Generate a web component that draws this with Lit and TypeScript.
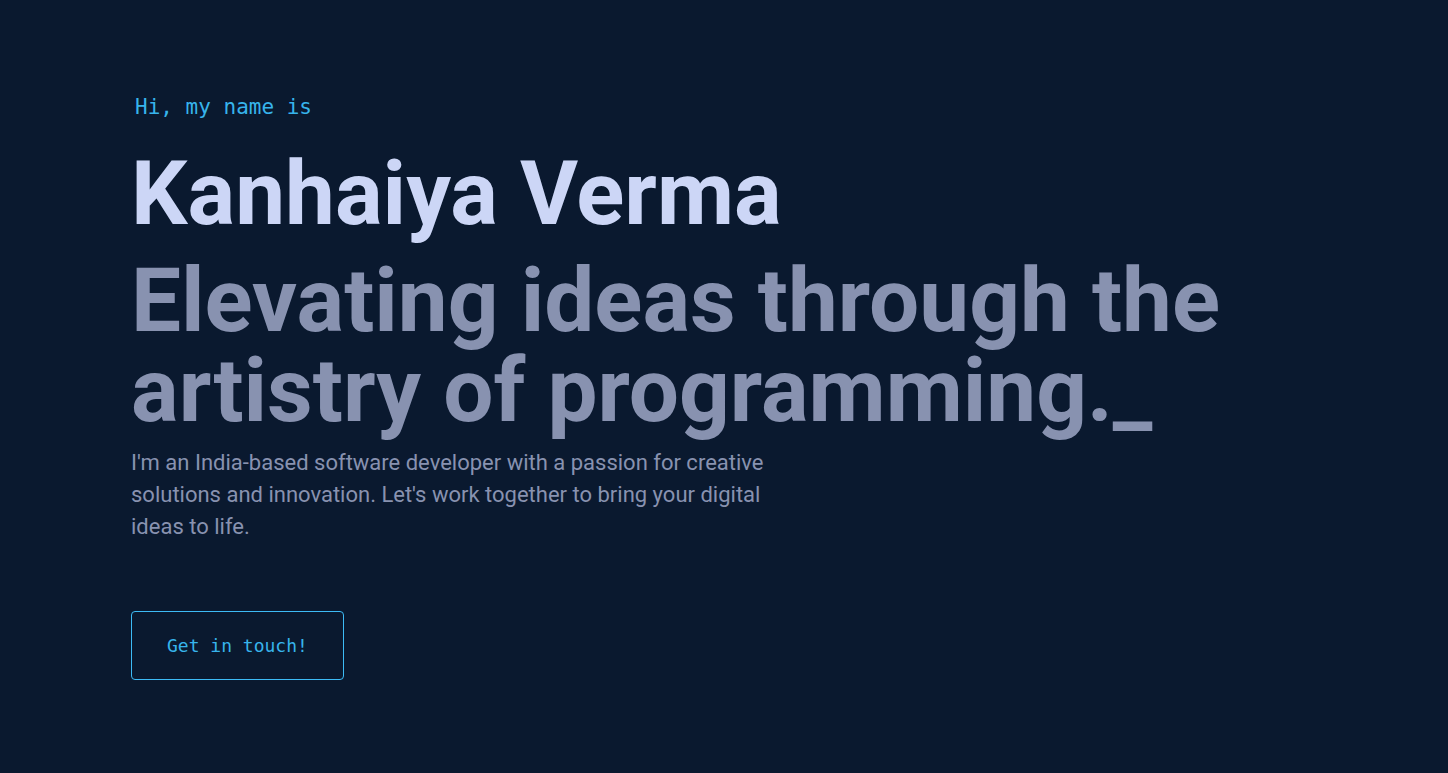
import { LitElement, html, css } from "lit";
import { customElement } from "lit/decorators.js";

@customElement("app-root")
export class AppRoot extends LitElement {
  static styles = css`
    :host {
      display: block;
      min-height: 100vh;
      background: #0a192f;
      font-family: Roboto, sans-serif;
    }
    .hero {
      padding: 91px 131px 93px;
    }
    .greeting {
      margin: 0 0 26px 4px;
      color: #37b4ec;
      font: 400 21px/32px "DejaVu Sans Mono", monospace;
    }
    .name,
    .tagline {
      margin: 0;
      font-size: 89px;
      font-weight: 700;
      line-height: 90px;
    }
    .name {
      color: #ccd6f6;
      margin-bottom: 17px;
    }
    .tagline {
      color: #8892b0;
    }
    .intro {
      max-width: 640px;
      margin: 11px 0 68px;
      color: #8892b0;
      font-size: 22px;
      line-height: 32px;
    }
    .contact {
      display: inline-block;
      padding: 23px 35px;
      border: 1px solid #3dbbf5;
      border-radius: 4px;
      color: #37b4ec;
      font: 400 18px/21px "DejaVu Sans Mono", monospace;
      text-decoration: none;
    }
  `;

  render() {
    return html`
      <main class="hero">
        <p class="greeting">Hi, my name is</p>
        <h1 class="name">Kanhaiya Verma</h1>
        <h2 class="tagline">Elevating ideas through the artistry of programming._</h2>
        <p class="intro">
          I'm an India-based software developer with a passion for creative
          solutions and innovation. Let's work together to bring your digital ideas to life.
        </p>
        <a class="contact" href="#contact">Get in touch!</a>
      </main>
    `;
  }
}
